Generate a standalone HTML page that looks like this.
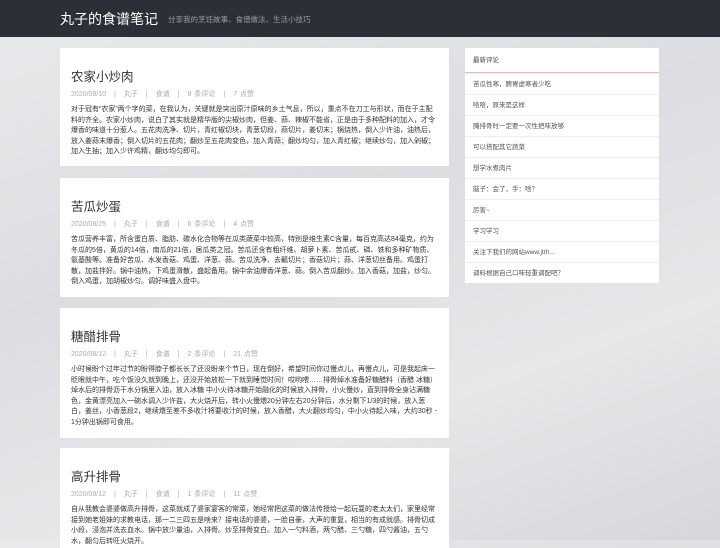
<!DOCTYPE html>
<html><head><meta charset="utf-8">
<style>
*{margin:0;padding:0;box-sizing:border-box}
body{width:720px;height:540px;overflow:hidden;font-family:"Liberation Sans","Noto Sans CJK SC",sans-serif;background:linear-gradient(160deg,#e9eaec 0%,#dcdde0 40%,#e6e7e9 70%,#d6d7da 100%);position:relative}
.hd{height:37px;background:#2b2f38;color:#fff;position:relative}
.hd h1{position:absolute;left:60px;top:9px;font-size:14px;font-weight:normal;letter-spacing:0}
.hd span{position:absolute;left:168px;top:14px;font-size:7.5px;color:#9a9ea6}
.card{position:absolute;left:60px;width:389px;background:#fff;padding:0 11px}
.card h2{font-size:12.5px;font-weight:normal;color:#333;margin-top:22px;height:14px;line-height:14px}
.meta{font-size:7px;color:#aaa;margin-top:6px;height:10px;line-height:10px;word-spacing:1px}
.meta b{font-weight:normal;margin:0 8px}
.card p{font-size:7px;line-height:10.5px;color:#333;width:368px;margin-top:5px}
.side{position:absolute;left:465px;top:48px;width:194px;background:#fff}
.side div{height:21px;line-height:21px;padding-left:8px;font-size:6.5px;color:#555;border-top:1px solid #eee}
.side .t{height:25px;line-height:25px;border-top:none;border-bottom:1px solid #f0b9ad;color:#444}
</style></head><body>
<div class="hd"><h1>丸子的食谱笔记</h1><span>分享我的烹饪故事、食谱做法、生活小技巧</span></div>

<div class="card" style="top:48px;height:118px">
<h2>农家小炒肉</h2>
<div class="meta">2020/09/10<b>|</b>丸子<b>|</b>食谱<b>|</b>9 条评论<b>|</b>7 点赞</div>
<p>对于冠有“农家”两个字的菜，在我认为，关键就是突出原汁原味的乡土气息，所以，重点不在刀工与形状，而在于主配料的齐全。农家小炒肉，说白了其实就是精华版的尖椒炒肉，但姜、蒜、辣椒不能省，正是由于多种配料的加入，才令爆香的味道十分惹人。五花肉洗净、切片，青红椒切块，青葱切段，蒜切片，姜切末；锅烧热，倒入少许油，油热后，放入姜蒜末爆香；倒入切片的五花肉；翻炒至五花肉变色，加入青蒜；翻炒均匀，加入青红椒；继续炒匀，加入剁椒；加入生抽；加入少许鸡精，翻炒均匀即可。</p>
</div>

<div class="card" style="top:178px;height:119px">
<h2>苦瓜炒蛋</h2>
<div class="meta">2020/08/25<b>|</b>丸子<b>|</b>食谱<b>|</b>6 条评论<b>|</b>4 点赞</div>
<p>苦瓜营养丰富，所含蛋白质、脂肪、碳水化合物等在瓜类蔬菜中较高，特别是维生素C含量，每百克高达84毫克，约为冬瓜的5倍，黄瓜的14倍，南瓜的21倍，居瓜类之冠。苦瓜还含有粗纤维、胡萝卜素、苦瓜甙、磷、铁和多种矿物质、氨基酸等。准备好苦瓜、水发香菇、鸡蛋、洋葱、蒜。苦瓜洗净、去瓤切片；香菇切片；蒜、洋葱切丝备用。鸡蛋打散，加盐拌好。锅中油热，下鸡蛋滑散，盛起备用。锅中余油爆香洋葱、蒜。倒入苦瓜翻炒。加入香菇，加盐，炒匀。倒入鸡蛋，加胡椒炒匀。调好味盛入盘中。</p>
</div>

<div class="card" style="top:308px;height:130px">
<h2>糖醋排骨</h2>
<div class="meta">2020/08/12<b>|</b>丸子<b>|</b>食谱<b>|</b>2 条评论<b>|</b>21 点赞</div>
<p>小时候盼个过年过节的盼得脖子都长长了还没盼来个节日，现在倒好，希望时间你过慢点儿，再慢点儿，可是我起床一眨眼就中午，吃个饭没久就到晚上，还没开始放松一下就到睡觉时间！哎哟喂……排骨焯水准备好糖醋料（香醋 冰糖）焯水后的排骨沥干水分锅里入油，放入冰糖 中小火待冰糖开始融化的时候放入排骨，小火慢炒，直到排骨全身沾满糖色，金黄漂亮加入一碗水调入少许盐，大火烧开后，转小火慢煨20分钟左右20分钟后，水分剩下1/3的时候，放入葱白，姜丝，小香葱段2，继续煨至差不多收汁将要收汁的时候，放入香醋，大火翻炒均匀，中小火待起入味，大约30秒 - 1分钟出锅即可食用。</p>
</div>

<div class="card" style="top:448px;height:100px">
<h2>高升排骨</h2>
<div class="meta">2020/08/12<b>|</b>丸子<b>|</b>食谱<b>|</b>1 条评论<b>|</b>11 点赞</div>
<p>自从我教会婆婆做高升排骨，这菜就成了婆家宴客的常菜，她经常把这菜的做法传授给一起玩耍的老太太们，家里经常接到她老姐妹的求教电话，那一二三四五是啥来？接电话的婆婆，一脸自豪，大声的重复，相当的有成就感。排骨切成小段，浸泡并洗去血水。锅中放少量油，入排骨。炒至排骨变白。加入一勺料酒，两勺醋、三勺糖，四勺酱油，五勺水，翻匀后转旺火烧开。</p>
</div>

<div class="side">
<div class="t">最新评论</div>
<div>苦瓜性寒，脾胃虚寒者少吃</div>
<div>哈哈，原来是这样</div>
<div>腌排骨时一定要一次性把味放够</div>
<div>可以搭配其它蔬菜</div>
<div>想学水煮肉片</div>
<div>脑子：会了，手：啥？</div>
<div>厉害~</div>
<div>学习学习</div>
<div>关注下我们的网站www.jtth...</div>
<div>调料根据自己口味轻重调配吧？</div>
</div>
</body></html>
